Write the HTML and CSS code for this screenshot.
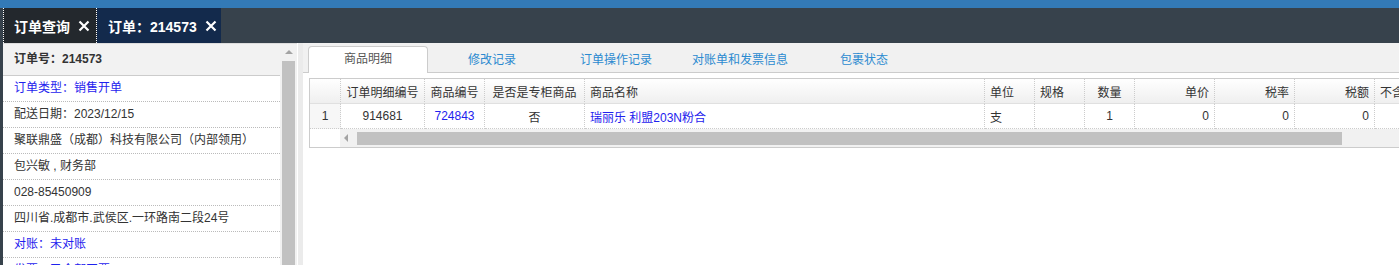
FILE: index.html
```html
<!DOCTYPE html>
<html lang="zh-CN">
<head>
    <meta charset="UTF-8">
    <title>订单：214573</title>
    <link rel="stylesheet" href="styles.css">
</head>
<body>
    <div class="topbar"></div>
    <div class="tabbar">
        <div class="tab tab-list">
            <span>订单查询</span>
            <svg class="close" viewBox="0 0 12 12"><path d="M1.5 1.5L10.5 10.5M10.5 1.5L1.5 10.5"/></svg>
        </div>
        <div class="tab tab-order">
            <span>订单：214573</span>
            <svg class="close" viewBox="0 0 12 12"><path d="M1.5 1.5L10.5 10.5M10.5 1.5L1.5 10.5"/></svg>
        </div>
    </div>
    <div class="main">
        <div class="side">
            <div class="side-body">
                <div class="side-head">订单号：214573</div>
                <div class="side-row link">订单类型：销售开单</div>
                <div class="side-row">配送日期：2023/12/15</div>
                <div class="side-row">聚联鼎盛（成都）科技有限公司（内部领用）</div>
                <div class="side-row">包兴敏 , 财务部</div>
                <div class="side-row">028-85450909</div>
                <div class="side-row">四川省.成都市.武侯区.一环路南二段24号</div>
                <div class="side-row link">对账：未对账</div>
                <div class="side-row link">发票：已全部开票</div>
            </div>
            <div class="vscroll">
                <div class="arrow-up"></div>
                <div class="vthumb"></div>
            </div>
        </div>
        <div class="splitter"></div>
        <div class="content">
            <div class="subtabs">
                <div class="subtab active">商品明细</div>
                <div class="subtab">修改记录</div>
                <div class="subtab">订单操作记录</div>
                <div class="subtab">对账单和发票信息</div>
                <div class="subtab">包裹状态</div>
            </div>
            <div class="grid">
                <table>
                    <thead>
                        <tr>
                            <th class="c-rn"></th>
                            <th class="c-id center">订单明细编号</th>
                            <th class="c-code center">商品编号</th>
                            <th class="c-flag center">是否是专柜商品</th>
                            <th class="c-name">商品名称</th>
                            <th class="c-unit">单位</th>
                            <th class="c-spec">规格</th>
                            <th class="c-qty center">数量</th>
                            <th class="c-num right">单价</th>
                            <th class="c-num right">税率</th>
                            <th class="c-num right">税额</th>
                            <th class="c-last">不含税金额</th>
                        </tr>
                    </thead>
                    <tbody>
                        <tr>
                            <td class="rn">1</td>
                            <td class="center">914681</td>
                            <td class="center link">724843</td>
                            <td class="center">否</td>
                            <td class="link">瑞丽乐 利盟203N粉合</td>
                            <td>支</td>
                            <td></td>
                            <td class="center">1</td>
                            <td class="right">0</td>
                            <td class="right">0</td>
                            <td class="right">0</td>
                            <td></td>
                        </tr>
                    </tbody>
                </table>
                <div class="hscroll">
                    <div class="hscroll-gap"></div>
                    <div class="hscroll-track">
                        <div class="arrow-left"></div>
                        <div class="hthumb"></div>
                    </div>
                </div>
            </div>
        </div>
    </div>
</body>
</html>
```

FILE: styles.css
```css
body {
    margin: 0;
    height: 265px;
    overflow: hidden;
    font-family: "Liberation Sans", "Noto Sans CJK SC", sans-serif;
    font-size: 12px;
    color: #333;
    background: #fff;
}
.topbar {
    height: 8px;
    background: #337ab7;
}
.tabbar {
    height: 35px;
    display: flex;
    padding-left: 3px;
    background: #37424c;
}
.tab {
    display: flex;
    align-items: center;
    box-sizing: border-box;
    padding-left: 11px;
    color: #fff;
    font-size: 14px;
    font-weight: bold;
}
.tab .close {
    width: 12px;
    height: 12px;
    margin-left: 8px;
    stroke: #fff;
    stroke-width: 2.2;
    fill: none;
}
.tab-list {
    width: 94px;
    background: #23282d;
    border-left: 1px dotted #fff;
    border-right: 1px dotted #fff;
    padding-left: 10px;
}
.tab-order {
    width: 124px;
    background: #132a4c;
}
.main {
    display: flex;
    height: 222px;
    border-left: 3px solid #37424c;
}
.side {
    display: flex;
    width: 294px;
    border-top: 1px solid #dddddd;
}
.side-body {
    width: 277px;
}
.side-head {
    height: 32px;
    box-sizing: border-box;
    padding-left: 11px;
    line-height: 31px;
    font-weight: bold;
    background: #f2f2f2;
    border-bottom: 1px solid #cccccc;
}
.side-row {
    height: 26px;
    box-sizing: border-box;
    padding-left: 11px;
    line-height: 25px;
    white-space: nowrap;
    border-bottom: 1px dotted #bbbbbb;
}
.link {
    color: #1e22ee;
}
.vscroll {
    width: 17px;
    display: flex;
    flex-direction: column;
    align-items: center;
    background: #f1f1f1;
}
.arrow-up {
    margin: 6px 0 7px;
    border-left: 4px solid transparent;
    border-right: 4px solid transparent;
    border-bottom: 4px solid #a3a3a3;
}
.vthumb {
    flex: 1;
    width: 13px;
    background: #c1c1c1;
}
.splitter {
    width: 5px;
    border-left: 1px solid #fff;
    background: #ebebeb;
}
.content {
    flex: 1;
    min-width: 0;
    overflow: hidden;
}
.subtabs {
    height: 30px;
    box-sizing: border-box;
    display: flex;
    align-items: flex-end;
    padding-left: 5px;
    background: #f1f1f1;
    border-bottom: 1px solid #cccccc;
}
.subtab {
    width: 120px;
    height: 26px;
    box-sizing: border-box;
    margin-right: 4px;
    margin-bottom: -1px;
    line-height: 25px;
    text-align: center;
    color: #2b8ad0;
    border: 1px solid transparent;
    border-bottom: none;
}
.subtab.active {
    color: #555;
    background: #fff;
    border-color: #cccccc;
    border-radius: 4px 4px 0 0;
    height: 27px;
}
.grid {
    width: 1300px;
    margin: 5px 0 0 6px;
    border: 1px solid #cccccc;
}
table {
    table-layout: fixed;
    border-collapse: separate;
    border-spacing: 0;
    width: 1165px;
}
th, td {
    box-sizing: border-box;
    height: 25px;
    padding: 0 5px;
    white-space: nowrap;
    overflow: hidden;
    text-align: left;
    font-weight: normal;
    border-right: 1px dotted #cccccc;
}
th {
    background: linear-gradient(#ffffff, #efefef);
    border-bottom: 1px solid #e0e0e0;
}
td {
    border-bottom: 1px dotted #cccccc;
}
.c-rn { width: 31px; }
.c-id { width: 84px; }
.c-code { width: 60px; }
.c-flag { width: 100px; }
.c-name { width: 400px; }
.c-unit, .c-spec, .c-qty { width: 50px; }
.c-num { width: 80px; }
.c-last { width: 100px; }
.center { text-align: center; }
.right { text-align: right; }
td.rn {
    text-align: center;
    background: #f7f7f7;
}
.hscroll {
    display: flex;
    height: 18px;
}
.hscroll-gap {
    width: 30px;
}
.hscroll-track {
    flex: 1;
    display: flex;
    align-items: center;
    background: #f1f1f1;
}
.arrow-left {
    margin: 0 9px 0 4px;
    border-top: 4px solid transparent;
    border-bottom: 4px solid transparent;
    border-right: 4px solid #a3a3a3;
}
.hthumb {
    width: 985px;
    height: 13px;
    background: #c1c1c1;
}
```
